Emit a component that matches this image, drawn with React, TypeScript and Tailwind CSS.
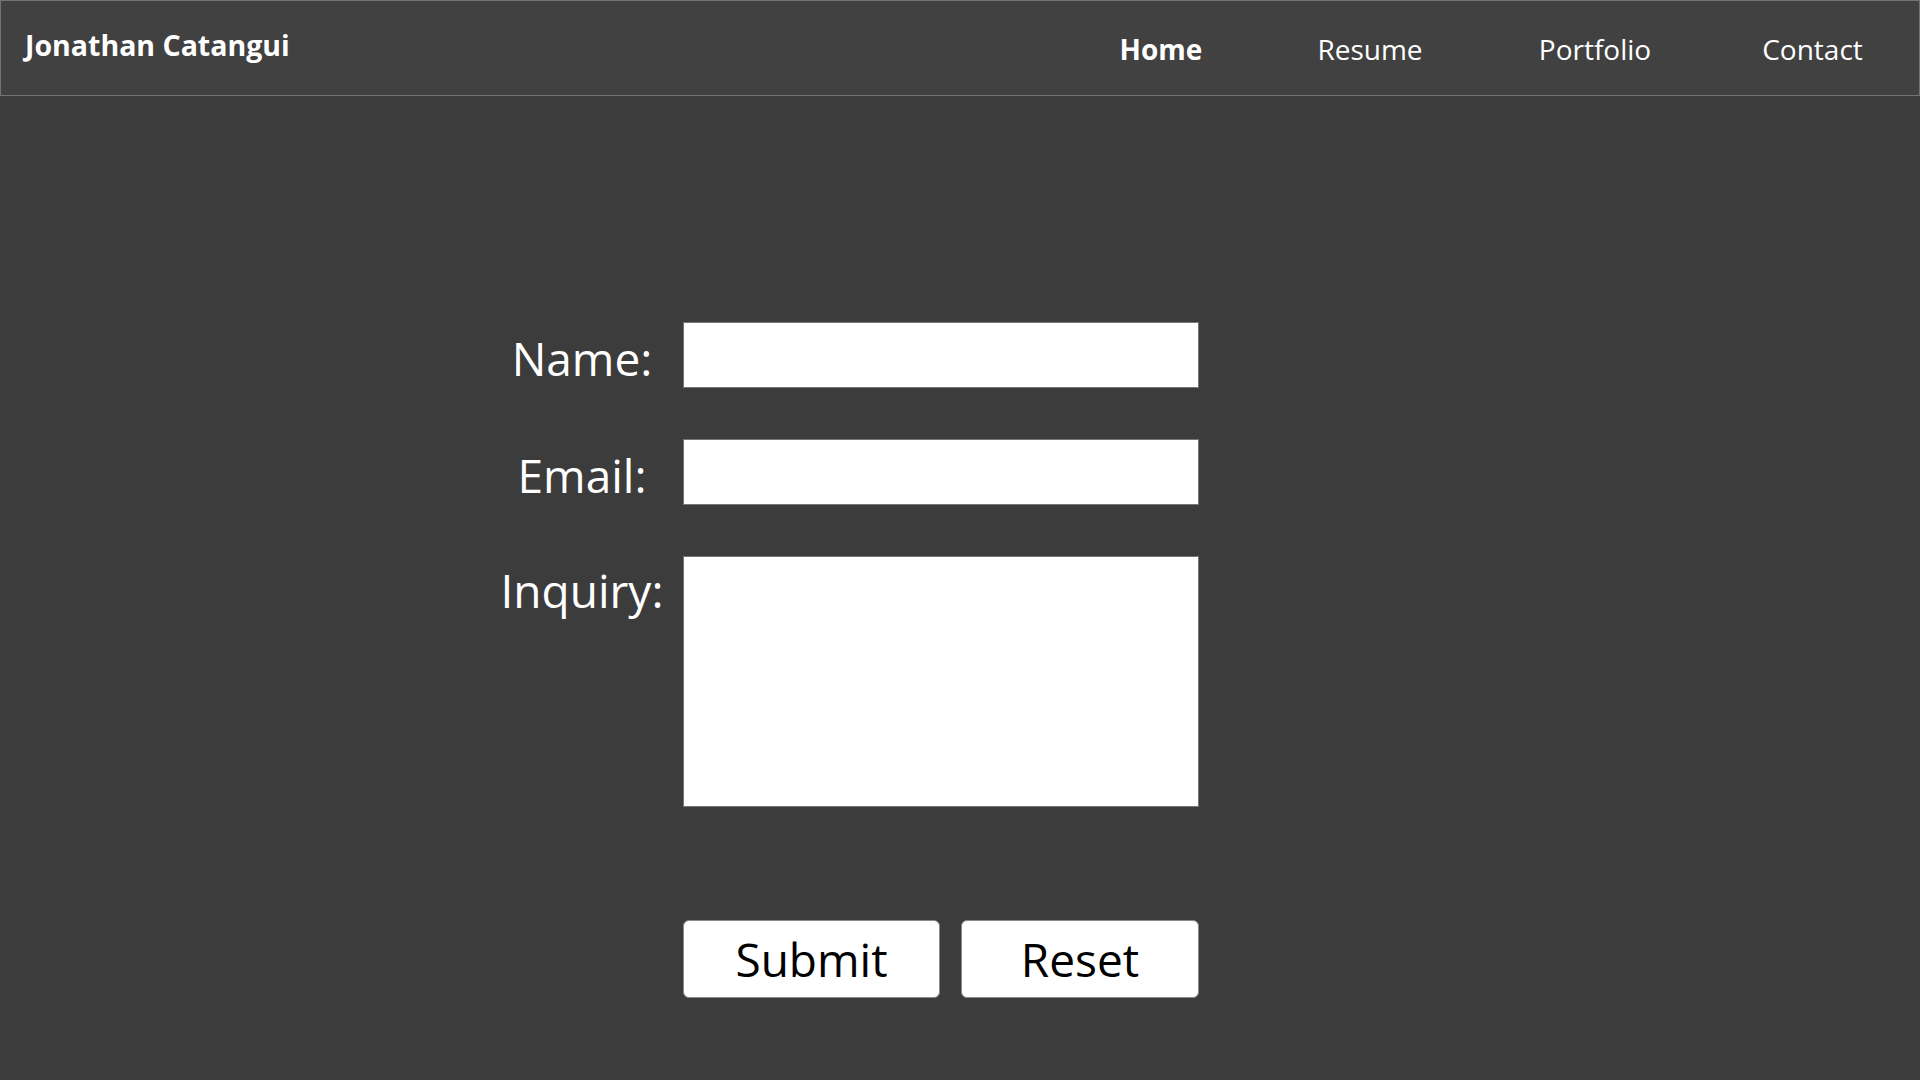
import React, { useState } from 'react';

const navLinks = [
  { label: 'Home', width: 'w-[190px]', active: true },
  { label: 'Resume', width: 'w-[228px]', active: false },
  { label: 'Portfolio', width: 'w-[222px]', active: false },
  { label: 'Contact', width: 'w-[213px]', active: false },
];

const App = () => {
  const [name, setName] = useState('');
  const [email, setEmail] = useState('');
  const [inquiry, setInquiry] = useState('');

  const reset = () => {
    setName('');
    setEmail('');
    setInquiry('');
  };

  return (
    <div className="min-h-screen bg-[#3c3c3c] text-white font-['Open_Sans',sans-serif]">
      <header className="h-[96px] bg-[#414141] border border-[#747474] flex justify-between items-start">
        <div className="pl-6 pt-[25px] text-[28.5px] leading-[38px] font-bold">Jonathan Catangui</div>
        <nav className="flex pt-[29px]">
          {navLinks.map(link => (
            <a
              key={link.label}
              href="#"
              className={`${link.width} text-center text-[28px] leading-[38px] ${link.active ? 'font-bold' : 'font-normal'}`}
            >
              {link.label}
            </a>
          ))}
        </nav>
      </header>

      <main className="pt-[226px] pl-[500px]">
        <form
          onSubmit={e => e.preventDefault()}
          onReset={reset}
          className="w-[699px]"
        >
          <div className="grid grid-cols-[164px_516px] gap-x-[19px] gap-y-[51px]">
            <label className="self-center translate-y-[3px] text-center text-[46px] leading-[62px]">Name:</label>
            <input
              value={name}
              onChange={e => setName(e.target.value)}
              className="h-[66px] bg-white border border-[#767676] text-black text-2xl px-2 outline-none"
            />
            <label className="self-center translate-y-[3px] text-center text-[46px] leading-[62px]">Email:</label>
            <input
              value={email}
              onChange={e => setEmail(e.target.value)}
              className="h-[66px] bg-white border border-[#767676] text-black text-2xl px-2 outline-none"
            />
            <label className="self-start text-center text-[46px] leading-[68px]">Inquiry:</label>
            <textarea
              value={inquiry}
              onChange={e => setInquiry(e.target.value)}
              className="h-[251px] bg-white border border-[#767676] text-black text-2xl p-2 resize-none outline-none"
            />
          </div>
          <div className="mt-[113px] ml-[183px] flex gap-[21px]">
            <button
              type="submit"
              className="w-[257px] h-[78px] bg-white text-black border border-[#8a8a8a] rounded-[6px] text-[46px] leading-none"
            >
              Submit
            </button>
            <button
              type="reset"
              className="w-[238px] h-[78px] bg-white text-black border border-[#8a8a8a] rounded-[6px] text-[46px] leading-none"
            >
              Reset
            </button>
          </div>
        </form>
      </main>
    </div>
  );
};

export default App;
